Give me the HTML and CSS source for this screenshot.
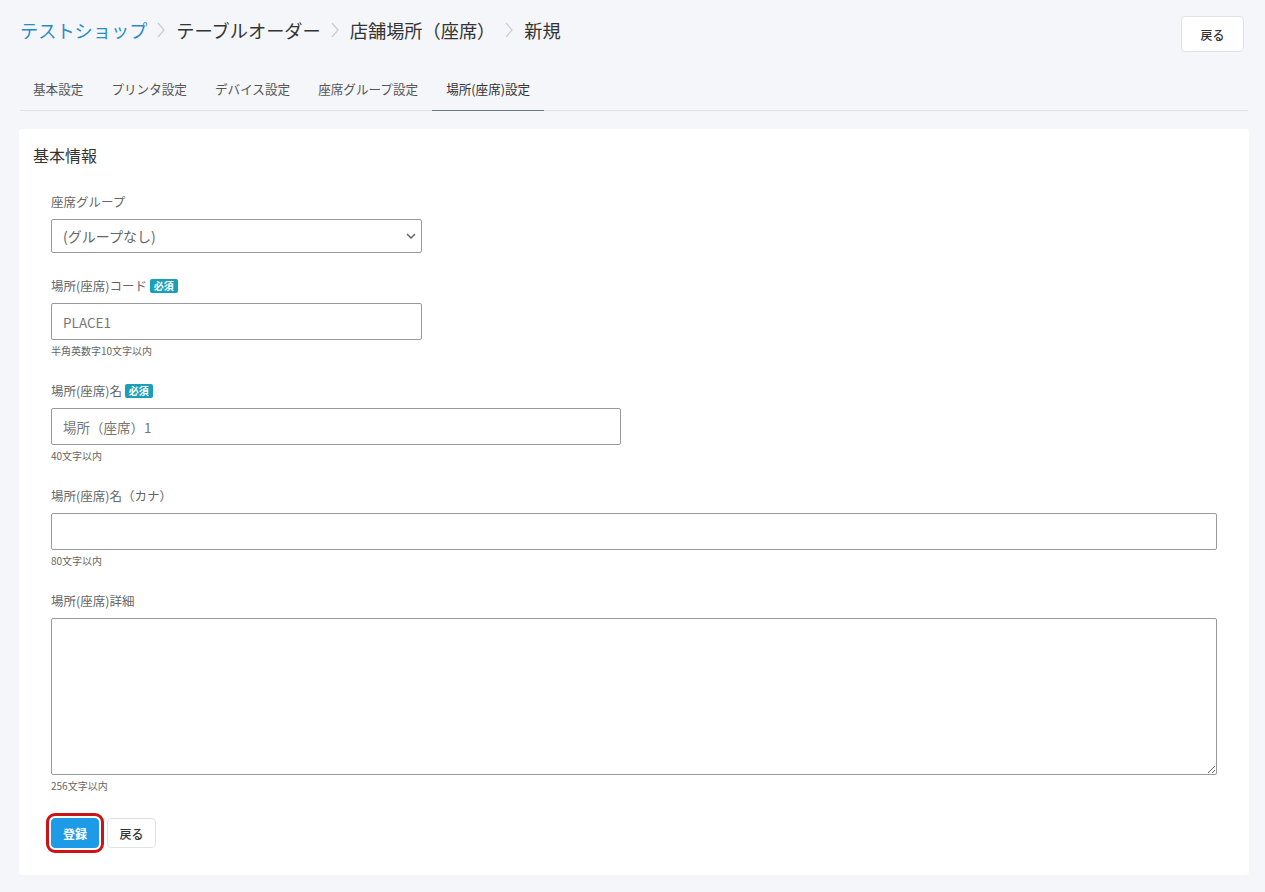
FILE: index.html
```html
<!DOCTYPE html>
<html lang="ja">
<head>
<meta charset="utf-8">
<title>場所(座席) 新規</title>
<link rel="stylesheet" href="styles.css">
</head>
<body>
<div class="page">
  <header class="header">
    <nav class="breadcrumb">
      <a class="crumb link" href="#">テストショップ</a>
      <svg class="sep" viewBox="0 0 10 18" width="10" height="18"><polyline points="2,2 8,9 2,16" fill="none" stroke="#c8ccd2" stroke-width="1.2"/></svg>
      <span class="crumb">テーブルオーダー</span>
      <svg class="sep" viewBox="0 0 10 18" width="10" height="18"><polyline points="2,2 8,9 2,16" fill="none" stroke="#c8ccd2" stroke-width="1.2"/></svg>
      <span class="crumb">店舗場所（座席）</span>
      <svg class="sep" viewBox="0 0 10 18" width="10" height="18"><polyline points="2,2 8,9 2,16" fill="none" stroke="#c8ccd2" stroke-width="1.2"/></svg>
      <span class="crumb">新規</span>
    </nav>
    <button class="btn btn-back-top">戻る</button>
  </header>

  <ul class="tabs">
    <li class="tab">基本設定</li>
    <li class="tab">プリンタ設定</li>
    <li class="tab">デバイス設定</li>
    <li class="tab">座席グループ設定</li>
    <li class="tab active">場所(座席)設定</li>
  </ul>

  <section class="card">
    <h2 class="card-title">基本情報</h2>
    <form class="form">
      <div class="field field-noh">
        <label class="label">座席グループ</label>
        <div class="select-wrap">
          <select class="select">
            <option>(グループなし)</option>
          </select>
          <svg class="select-arrow" viewBox="0 0 10 6" width="10" height="6"><polyline points="1,1 5,5 9,1" fill="none" stroke="#666" stroke-width="1.5"/></svg>
        </div>
      </div>

      <div class="field">
        <label class="label">場所(座席)コード <span class="badge">必須</span></label>
        <input class="input w-sm" type="text" value="PLACE1">
        <div class="help">半角英数字10文字以内</div>
      </div>

      <div class="field">
        <label class="label">場所(座席)名 <span class="badge">必須</span></label>
        <input class="input w-md" type="text" value="場所（座席）1">
        <div class="help">40文字以内</div>
      </div>

      <div class="field">
        <label class="label">場所(座席)名（カナ）</label>
        <input class="input w-full" type="text" value="">
        <div class="help">80文字以内</div>
      </div>

      <div class="field">
        <label class="label">場所(座席)詳細</label>
        <textarea class="textarea"></textarea>
        <div class="help">256文字以内</div>
      </div>

      <div class="actions">
        <button type="button" class="btn btn-primary">登録</button>
        <button type="button" class="btn btn-default">戻る</button>
      </div>
    </form>
  </section>
</div>
</body>
</html>
```

FILE: styles.css
```css
* { box-sizing: border-box; }
html, body {
  margin: 0;
  padding: 0;
  background: #f4f6f9;
  font-family: "Noto Sans CJK JP", "Noto Sans", sans-serif;
  color: #333;
}
.page {
  padding: 16px 16px 17px 19px;
}
.header {
  display: flex;
  justify-content: space-between;
  align-items: flex-start;
  height: 36px;
}
.breadcrumb {
  display: flex;
  align-items: center;
  padding-left: 1px;
  height: 28px;
}
.crumb {
  font-size: 18.2px;
  line-height: 28px;
  color: #333;
  text-decoration: none;
}
.crumb.link { color: #2b8bc6; }
.sep { margin: 0 10px 0 9px; }
.btn {
  font-family: "Noto Sans CJK JP", sans-serif;
  cursor: pointer;
  border-radius: 4px;
}
.btn-back-top {
  width: 63px;
  height: 36px;
  margin-right: 5px;
  background: #fff;
  border: 1px solid #dfe3e8;
  font-size: 12px;
  font-weight: 500;
  color: #333;
}
.tabs {
  list-style: none;
  margin: 18px 1px 0 1px;
  padding: 0;
  display: flex;
  border-bottom: 1px solid #dfe3e8;
  height: 41px;
}
.tab {
  padding: 0 14px;
  font-size: 12.6px;
  line-height: 37px;
  color: #555;
  border-bottom: 2px solid transparent;
  height: 41px;
}
.tab:first-child { padding-left: 13px; }
.tab.active {
  color: #333;
  border-bottom: 1px solid #6c7a8e;
}
.card {
  margin-top: 18px;
  background: #fff;
  border-radius: 4px;
  padding: 15px 14px 27px 14px;
}
.card-title {
  margin: 0;
  font-size: 16px;
  font-weight: 400;
  line-height: 22px;
  color: #333;
}
.form {
  margin: 27px 18px 0 18px;
}
.field { margin-bottom: 24px; }
.field-noh { margin-bottom: 24px; }
.label {
  display: block;
  font-size: 12.5px;
  line-height: 18px;
  color: #666;
  margin-bottom: 8px;
}
.badge {
  display: inline-block;
  background: #1a9fb8;
  color: #fff;
  font-size: 10px;
  font-weight: 700;
  line-height: 14px;
  padding: 0 4px;
  border-radius: 2px;
  vertical-align: 1px;
}
.select-wrap {
  position: relative;
  width: 371px;
}
.select {
  appearance: none;
  -webkit-appearance: none;
  display: block;
  width: 371px;
  height: 34px;
  border: 1px solid #9a9a9a;
  border-radius: 2px;
  background: #fff;
  font-family: "Noto Sans CJK JP", sans-serif;
  font-size: 14px;
  color: #666;
  padding: 0 11px;
}
.select-arrow {
  position: absolute;
  right: 6px;
  top: 14px;
}
.input {
  display: block;
  height: 37px;
  border: 1px solid #9a9a9a;
  border-radius: 2px;
  background: #fff;
  font-family: "Noto Sans CJK JP", sans-serif;
  font-size: 13.5px;
  color: #777;
  padding: 0 11px;
}
.w-sm { width: 371px; }
.w-md { width: 570px; }
.w-full { width: 100%; }
.textarea {
  display: block;
  width: 100%;
  height: 157px;
  border: 1px solid #9a9a9a;
  border-radius: 2px;
  background: #fff;
  font-family: "Noto Sans CJK JP", sans-serif;
  font-size: 13.5px;
  resize: vertical;
}
.help {
  margin-top: 4px;
  font-size: 10px;
  line-height: 14px;
  color: #666;
}
.actions {
  display: flex;
  gap: 8px;
  padding-top: 1px;
}
.btn-primary {
  width: 48px;
  height: 30px;
  background: #1d9be6;
  border: 1px solid #1d9be6;
  color: #fff;
  font-size: 12px;
  font-weight: 700;
  outline: 3px solid #cc1418;
  outline-offset: 2px;
  border-radius: 4px;
}
.btn-default {
  width: 49px;
  height: 30px;
  background: #fff;
  border: 1px solid #dfe3e8;
  color: #333;
  font-size: 12px;
  font-weight: 500;
}
```
